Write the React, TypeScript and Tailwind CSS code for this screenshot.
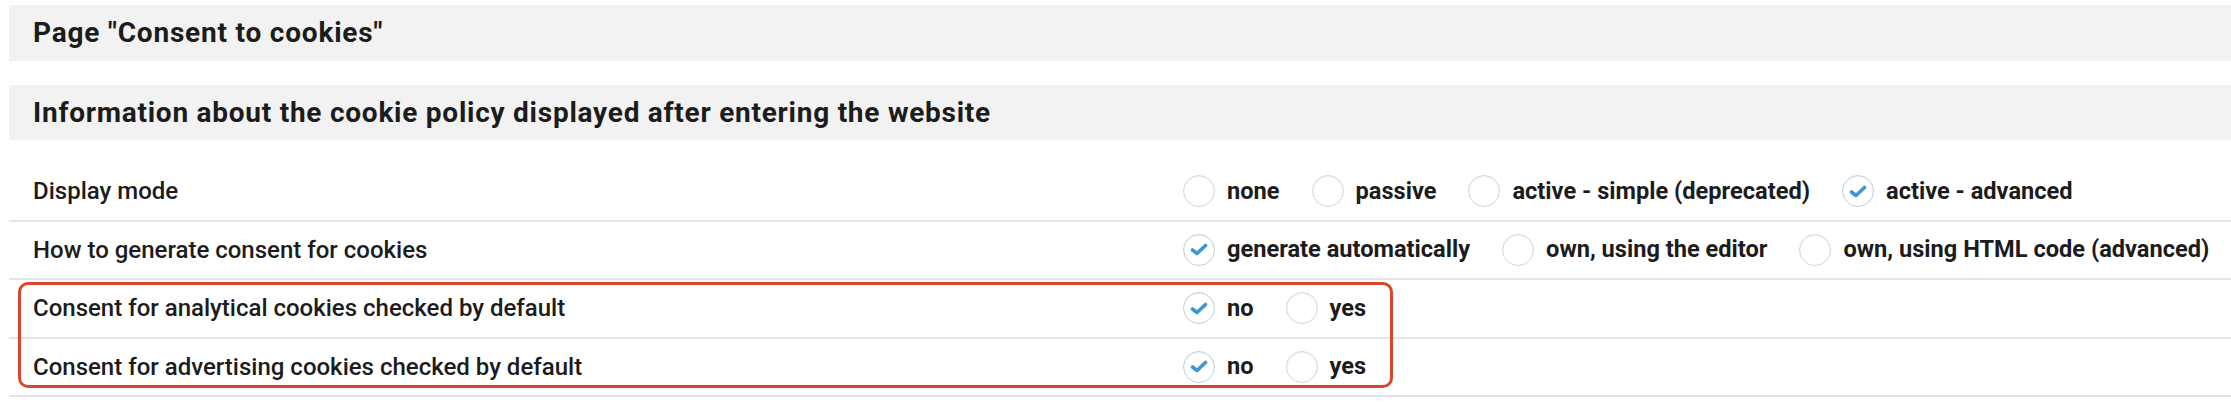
import { useState } from "react";

type Opt = { value: string; label: string };

const rows: { id: string; label: string; options: Opt[]; initial: string }[] = [
  {
    id: "mode",
    label: "Display mode",
    options: [
      { value: "none", label: "none" },
      { value: "passive", label: "passive" },
      { value: "simple", label: "active - simple (deprecated)" },
      { value: "advanced", label: "active - advanced" },
    ],
    initial: "advanced",
  },
  {
    id: "generate",
    label: "How to generate consent for cookies",
    options: [
      { value: "auto", label: "generate automatically" },
      { value: "editor", label: "own, using the editor" },
      { value: "html", label: "own, using HTML code (advanced)" },
    ],
    initial: "auto",
  },
  {
    id: "analytical",
    label: "Consent for analytical cookies checked by default",
    options: [
      { value: "no", label: "no" },
      { value: "yes", label: "yes" },
    ],
    initial: "no",
  },
  {
    id: "advertising",
    label: "Consent for advertising cookies checked by default",
    options: [
      { value: "no", label: "no" },
      { value: "yes", label: "yes" },
    ],
    initial: "no",
  },
];

function Radio({ checked }: { checked: boolean }) {
  return (
    <span
      className={`flex h-[32px] w-[32px] shrink-0 items-center justify-center rounded-full border-[1.5px] bg-white ${
        checked ? "border-[#c2cfda]" : "border-[#d6d6d6]"
      } shadow-[inset_0_1px_2px_rgba(0,0,0,0.06)]`}
    >
      {checked && (
        <svg width="18" height="15" viewBox="0 0 18 15">
          <path d="M2.5 8 L7 11.5 L15.5 3.5" fill="none" stroke="#3d97d6" strokeWidth="3.6" strokeLinecap="round" strokeLinejoin="round" />
        </svg>
      )}
    </span>
  );
}

export default function App() {
  const [values, setValues] = useState<Record<string, string>>(
    Object.fromEntries(rows.map(r => [r.id, r.initial]))
  );

  return (
    <div className="min-h-screen bg-white pl-[9px] pt-[5px] text-[#1c1c1c]" style={{ fontFamily: "Roboto, 'Liberation Sans', sans-serif" }}>
      {/* section headers */}
      <div className="flex h-[56px] items-center bg-[#f2f2f2] pl-[24px] text-[28px] font-bold tracking-[0.8px]">Page "Consent to cookies"</div>
      <div className="mt-[24px] flex h-[55px] items-center bg-[#f2f2f2] pl-[24px] text-[28px] font-bold tracking-[0.75px]">
        Information about the cookie policy displayed after entering the website
      </div>

      {/* settings */}
      <div className="relative mt-[23px]">
        {rows.map(row => (
          <div key={row.id} className="flex h-[58.5px] items-center border-b-2 border-[#e4e4e4]">
            <div className="w-[1174px] shrink-0 pl-[24px] text-[24px] font-medium">{row.label}</div>
            <div className="flex items-center gap-[32px]">
              {row.options.map(opt => (
                <label
                  key={opt.value}
                  className="flex cursor-pointer items-center gap-[12px] text-[23.6px] font-bold"
                  onClick={() => setValues(v => ({ ...v, [row.id]: opt.value }))}
                >
                  <Radio checked={values[row.id] === opt.value} />
                  <span>{opt.label}</span>
                </label>
              ))}
            </div>
          </div>
        ))}

        {/* highlight annotation */}
        <div className="pointer-events-none absolute left-[9px] top-[119px] h-[106px] w-[1375px] rounded-[10px] border-[3px] border-[#d9452f]" />
      </div>
    </div>
  );
}
